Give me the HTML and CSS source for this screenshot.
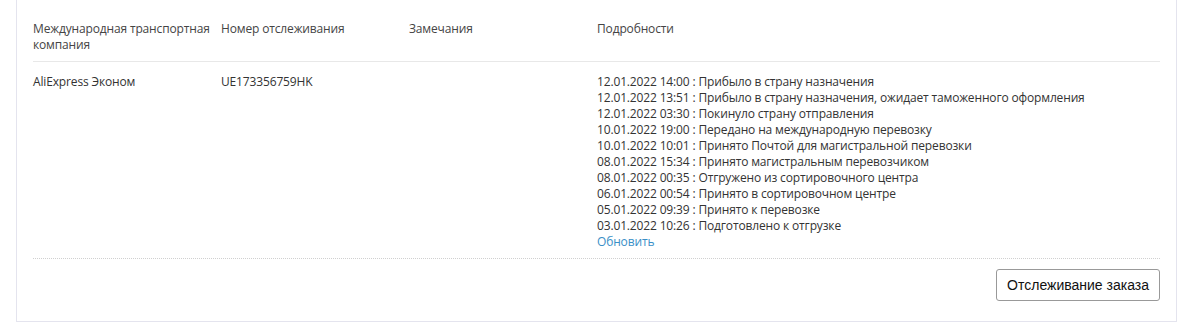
FILE: index.html
```html
<!DOCTYPE html>
<html lang="ru">
<head>
<meta charset="utf-8">
<link rel="stylesheet" href="styles.css">
</head>
<body>
<div class="panel">
  <div class="table">
    <div class="row head">
      <div class="cell">Международная транспортная компания</div>
      <div class="cell">Номер отслеживания</div>
      <div class="cell">Замечания</div>
      <div class="cell">Подробности</div>
    </div>
    <div class="row body">
      <div class="cell">AliExpress Эконом</div>
      <div class="cell">UE173356759HK</div>
      <div class="cell"></div>
      <div class="cell">
        <div>12.01.2022 14:00 : Прибыло в страну назначения</div>
        <div>12.01.2022 13:51 : Прибыло в страну назначения, ожидает таможенного оформления</div>
        <div>12.01.2022 03:30 : Покинуло страну отправления</div>
        <div>10.01.2022 19:00 : Передано на международную перевозку</div>
        <div>10.01.2022 10:01 : Принято Почтой для магистральной перевозки</div>
        <div>08.01.2022 15:34 : Принято магистральным перевозчиком</div>
        <div>08.01.2022 00:35 : Отгружено из сортировочного центра</div>
        <div>06.01.2022 00:54 : Принято в сортировочном центре</div>
        <div>05.01.2022 09:39 : Принято к перевозке</div>
        <div>03.01.2022 10:26 : Подготовлено к отгрузке</div>
        <a class="refresh" href="#">Обновить</a>
      </div>
    </div>
  </div>
  <div class="actions">
    <button class="btn">Отслеживание заказа</button>
  </div>
</div>
</body>
</html>
```
FILE: styles.css
```css
html, body { margin: 0; padding: 0; background: #fff; }
body { font-family: "Open Sans", "Noto Sans", sans-serif; font-size: 12px; line-height: 16px; color: #333; letter-spacing: -0.15px; }
.panel {
  margin-left: 16px;
  width: 1127px;
  padding: 0 16px 20px 16px;
  border: 1px solid #e4e4ee;
  border-top: none;
}
.row { display: grid; grid-template-columns: 188px 188px 188px 1fr; }
.head { padding: 21px 0 8px; border-bottom: 1px solid #e8e8e8; color: #444; }
.body { padding: 12px 0 8px; border-bottom: 1px dotted #d0d0d0; }
.cell { padding-right: 2px; }
.refresh { color: #3a8fc7; text-decoration: none; display: block; }
.actions { display: flex; justify-content: flex-end; padding-top: 10px; }
.btn {
  font-family: "Liberation Sans", Arial, sans-serif;
  font-size: 14px;
  letter-spacing: 0;
  color: #111;
  background: #fff;
  border: 1px solid #999;
  border-radius: 3px;
  height: 32px;
  padding: 0 10px;
}
```
